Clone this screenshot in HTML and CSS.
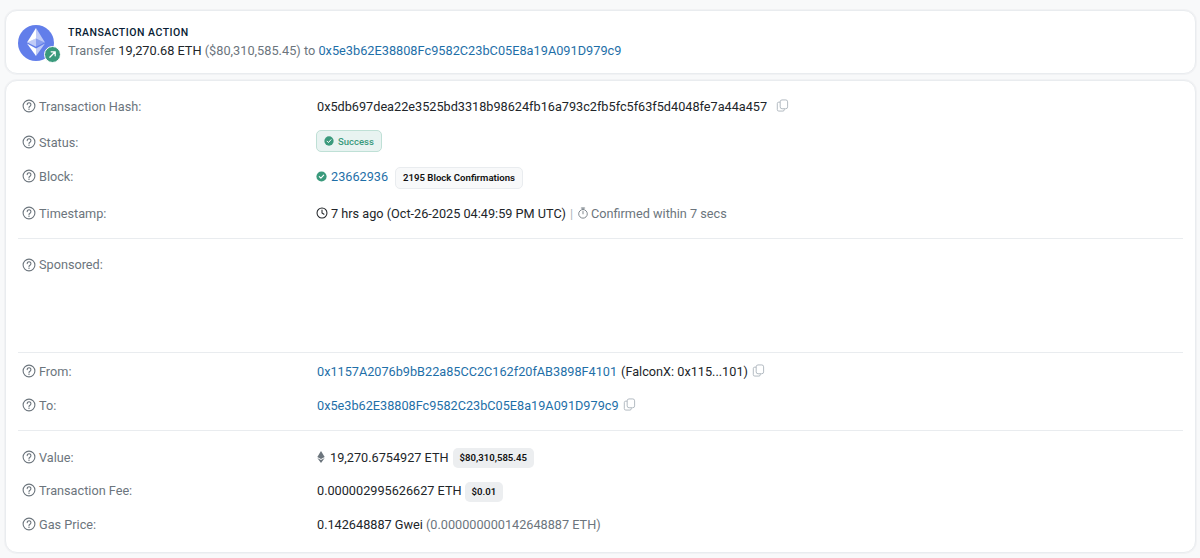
FILE: index.html
```html
<html lang="en">
  <head>
    <meta charset="UTF-8" />
    <title>Transaction Details</title>
    <link rel="stylesheet" href="styles.css">
  </head>
  <body>
    <svg class="sprites" width="0" height="0">
      <symbol id="help" viewBox="0 0 14 14">
        <circle cx="7" cy="7" r="5.9" fill="none" stroke="currentColor" stroke-width="1.1" />
        <path d="M5.2 5.6a1.85 1.85 0 1 1 2.8 1.6c-.65.4-1 .7-1 1.4" fill="none" stroke="currentColor" stroke-width="1.1" stroke-linecap="round" />
        <circle cx="7" cy="10.3" r=".7" fill="currentColor" />
      </symbol>
      <symbol id="copy" viewBox="0 0 14 14">
        <rect x="4.5" y="1" width="8" height="9.5" rx="2" fill="none" stroke="currentColor" stroke-width="1" />
        <path d="M4.5 3.4H3a1.6 1.6 0 0 0-1.6 1.6v6.4A1.6 1.6 0 0 0 3 13h4.4A1.6 1.6 0 0 0 9 11.4v-.9" fill="none" stroke="currentColor" stroke-width="1" />
      </symbol>
      <symbol id="check" viewBox="0 0 14 14">
        <circle cx="7" cy="7" r="6.5" fill="currentColor" />
        <path d="M4.2 7.2l2 2 3.6-4" fill="none" stroke="#fff" stroke-width="1.4" stroke-linecap="round" stroke-linejoin="round" />
      </symbol>
    </svg>

    <!-- Transaction action -->
    <section class="card action">
      <div class="action-icon">
        <svg class="eth-logo" viewBox="0 0 36 36" width="36" height="36">
          <circle cx="18" cy="18" r="18" fill="#627eea" />
          <path d="M18 3v10.500l9 4z" fill="#fff" fill-opacity=".6" />
          <path d="M18 3l-9 14.500 9-4z" fill="#fff" />
          <path d="M18 23.600V31l9-12.500z" fill="#fff" fill-opacity=".6" />
          <path d="M18 23.600V31l-9-12.500z" fill="#fff" />
          <path d="M18 21.800l9-4.600-9-4z" fill="#fff" fill-opacity=".25" />
          <path d="M9 17.200l9 4.600v-8.600z" fill="#fff" fill-opacity=".6" />
        </svg>
        <span class="action-badge">
          <svg viewBox="0 0 10 10" width="9" height="9"><path d="M2 8l6-6M3.500 2H8v4.500" fill="none" stroke="#fff" stroke-width="1.400" stroke-linecap="round" stroke-linejoin="round" /></svg>
        </span>
      </div>
      <div>
        <h2 class="action-title">TRANSACTION ACTION</h2>
        <p class="action-text">Transfer <span class="dark">19,270.68 ETH</span> ($80,310,585.45) to <a href="#">0x5e3b62E38808Fc9582C23bC05E8a19A091D979c9</a></p>
      </div>
    </section>

    <!-- Details -->
    <main class="card details">
      <div class="group group-first">
        <div class="row row-hash">
          <div class="label"><svg class="help"><use href="#help" /></svg>Transaction Hash:</div>
          <div class="value">0x5db697dea22e3525bd3318b98624fb16a793c2fb5fc5f63f5d4048fe7a44a457<svg class="copy copy-hash"><use href="#copy" /></svg></div>
        </div>
        <div class="row row-status">
          <div class="label"><svg class="help"><use href="#help" /></svg>Status:</div>
          <div class="value"><span class="status"><svg class="status-check"><use href="#check" /></svg>Success</span></div>
        </div>
        <div class="row row-block">
          <div class="label"><svg class="help"><use href="#help" /></svg>Block:</div>
          <div class="value"><svg class="block-check"><use href="#check" /></svg><a href="#">23662936</a><span class="pill pill-outline">2195 Block Confirmations</span></div>
        </div>
        <div class="row row-time">
          <div class="label"><svg class="help"><use href="#help" /></svg>Timestamp:</div>
          <div class="value">
            <svg class="clock" viewBox="0 0 14 14"><circle cx="7" cy="7" r="5.800" fill="none" stroke="currentColor" stroke-width="1.200" /><path d="M7 3.600V7l2.300 1.500" fill="none" stroke="currentColor" stroke-width="1.200" stroke-linecap="round" /></svg>
            <span>7 hrs ago (Oct-26-2025 04:49:59 PM UTC)</span>
            <span class="sep">|</span>
            <svg class="timer" viewBox="0 0 14 14"><circle cx="7" cy="8" r="5" fill="none" stroke="currentColor" stroke-width="1" /><path d="M5 1.200h4M7 1.200v1.800M7 5.200V8" fill="none" stroke="currentColor" stroke-width="1" stroke-linecap="round" /></svg>
            <span class="muted">Confirmed within 7 secs</span>
          </div>
        </div>
      </div>

      <div class="group group-sponsored">
        <div class="label"><svg class="help"><use href="#help" /></svg>Sponsored:</div>
      </div>

      <div class="group group-parties">
        <div class="row row-from">
          <div class="label"><svg class="help"><use href="#help" /></svg>From:</div>
          <div class="value"><a href="#">0x1157A2076b9bB22a85CC2C162f20fAB3898F4101</a><span class="owner">(FalconX: 0x115...101)</span><svg class="copy"><use href="#copy" /></svg></div>
        </div>
        <div class="row row-to">
          <div class="label"><svg class="help"><use href="#help" /></svg>To:</div>
          <div class="value"><a href="#">0x5e3b62E38808Fc9582C23bC05E8a19A091D979c9</a><svg class="copy"><use href="#copy" /></svg></div>
        </div>
      </div>

      <div class="group group-value">
        <div class="row row-value">
          <div class="label"><svg class="help"><use href="#help" /></svg>Value:</div>
          <div class="value">
            <svg class="eth-small" viewBox="0 0 8 13"><path d="M4 0L0 6.500 4 8.700l4-2.200z" fill="#6c757d" /><path d="M0 7.500L4 13l4-5.500-4 2.200z" fill="#6c757d" /></svg>
            <span>19,270.6754927 ETH</span><span class="pill">$80,310,585.45</span>
          </div>
        </div>
        <div class="row row-fee">
          <div class="label"><svg class="help"><use href="#help" /></svg>Transaction Fee:</div>
          <div class="value"><span>0.000002995626627 ETH</span><span class="pill pill-fee">$0.01</span></div>
        </div>
        <div class="row row-gas">
          <div class="label"><svg class="help"><use href="#help" /></svg>Gas Price:</div>
          <div class="value">0.142648887 Gwei <span class="muted gwei">(0.000000000142648887 ETH)</span></div>
        </div>
      </div>
    </main>
  </body>
</html>
```

FILE: styles.css
```css
html {
  overflow: hidden;
}
body {
  background-color: #f8f9fa;
  color: #212529;
  font-family: Roboto, "Liberation Sans", sans-serif;
  font-size: 12.7px;
  margin: 0;
  padding: 10px 4px 0 5px;
}
a {
  color: #1e6fa8;
  text-decoration: none;
}
.sprites {
  position: absolute;
}
.card {
  background-color: white;
  border: 1px solid #e9ecef;
  border-radius: 12px;
  box-sizing: border-box;
  box-shadow: 0 0 0 1px #f1f2f4;
}
.action {
  display: flex;
  align-items: center;
  height: 64px;
  padding: 0 13px 0 12px;
  margin-bottom: 6px;
}
.action-icon {
  position: relative;
  width: 36px;
  height: 36px;
  margin-right: 14px;
  margin-top: 1px;
}
.eth-logo {
  display: block;
}
.action-badge {
  position: absolute;
  right: -7px;
  bottom: -2px;
  display: flex;
  align-items: center;
  justify-content: center;
  width: 15px;
  height: 15px;
  background-color: #3a9a7c;
  border-radius: 50%;
  border: 1px solid white;
}
.action-title {
  font-size: 10.5px;
  font-weight: 500;
  letter-spacing: 0.5px;
  color: #081d35;
  margin: 2px 0 2px 0;
  line-height: 14px;
}
.action-text {
  color: #6c757d;
  font-size: 12.75px;
  margin: 0;
  line-height: 18px;
}
.dark {
  color: #212529;
}
.details {
  height: 473px;
  padding: 0 12px;
}
.group {
  border-bottom: 1px solid #e9ecef;
  box-sizing: border-box;
}
.group-first {
  height: 158px;
  padding-top: 7px;
}
.group-sponsored {
  height: 114px;
  padding-top: 18px;
}
.group-parties {
  height: 78px;
  padding-top: 1px;
}
.group-value {
  height: 122px;
  border-bottom: none;
  padding-top: 10px;
}
.row {
  display: flex;
  align-items: center;
}
.row-hash,
.row-status {
  height: 36px;
}
.row-block {
  height: 32px;
}
.row-time {
  height: 42px;
}
.row-from,
.row-to {
  height: 34px;
}
.row-value {
  height: 32px;
}
.row-fee,
.row-gas {
  height: 34px;
}
.label {
  display: flex;
  align-items: center;
  width: 299px;
  flex-shrink: 0;
  color: #6c757d;
  padding-left: 4px;
  box-sizing: border-box;
}
.help {
  width: 14px;
  height: 14px;
  margin-right: 3px;
  color: #6c757d;
}
.value {
  display: flex;
  align-items: center;
  white-space: pre;
}
.copy {
  width: 13px;
  height: 13px;
  margin-left: 4px;
  margin-bottom: 1px;
  color: #adb5bd;
}
.copy-hash {
  margin-left: 9px;
}
.owner {
  margin-left: 4px;
}
.status {
  display: flex;
  align-items: center;
  height: 22px;
  padding: 0 7px;
  margin: -2px 0 0 -1px;
  font-size: 9.5px;
  font-weight: 500;
  color: #3a9a7c;
  background-color: #e8f3f1;
  border: 1px solid #bfe0d6;
  border-radius: 5px;
  box-sizing: border-box;
}
.status-check {
  width: 10px;
  height: 10px;
  margin-right: 4px;
}
.block-check {
  width: 11px;
  height: 11px;
  margin: 0 4px 0 -1px;
  color: #3a9a7c;
}
.pill {
  display: inline-block;
  font-size: 9.6px;
  font-weight: 600;
  color: #111;
  background-color: #eceef0;
  border-radius: 5px;
  padding: 0 7px;
  line-height: 20px;
  margin: 2px 0 0 4px;
}
.pill-outline {
  background-color: #f8f9fa;
  border: 1px solid #e9ecef;
  margin: 4px 0 0 7px;
  padding: 0 7px;
}
.pill-fee {
  margin: 3px 0 0 3px;
}
.clock {
  width: 12px;
  height: 12px;
  margin: 0 3px 0 -1px;
}
.timer {
  width: 12px;
  height: 12px;
  color: #6c757d;
  margin-right: 2px;
}
.sep {
  color: #adb5bd;
  margin: 0 4px;
}
.muted {
  color: #6c757d;
}
.eth-small {
  width: 8px;
  height: 12px;
  margin-right: 5px;
}
```
